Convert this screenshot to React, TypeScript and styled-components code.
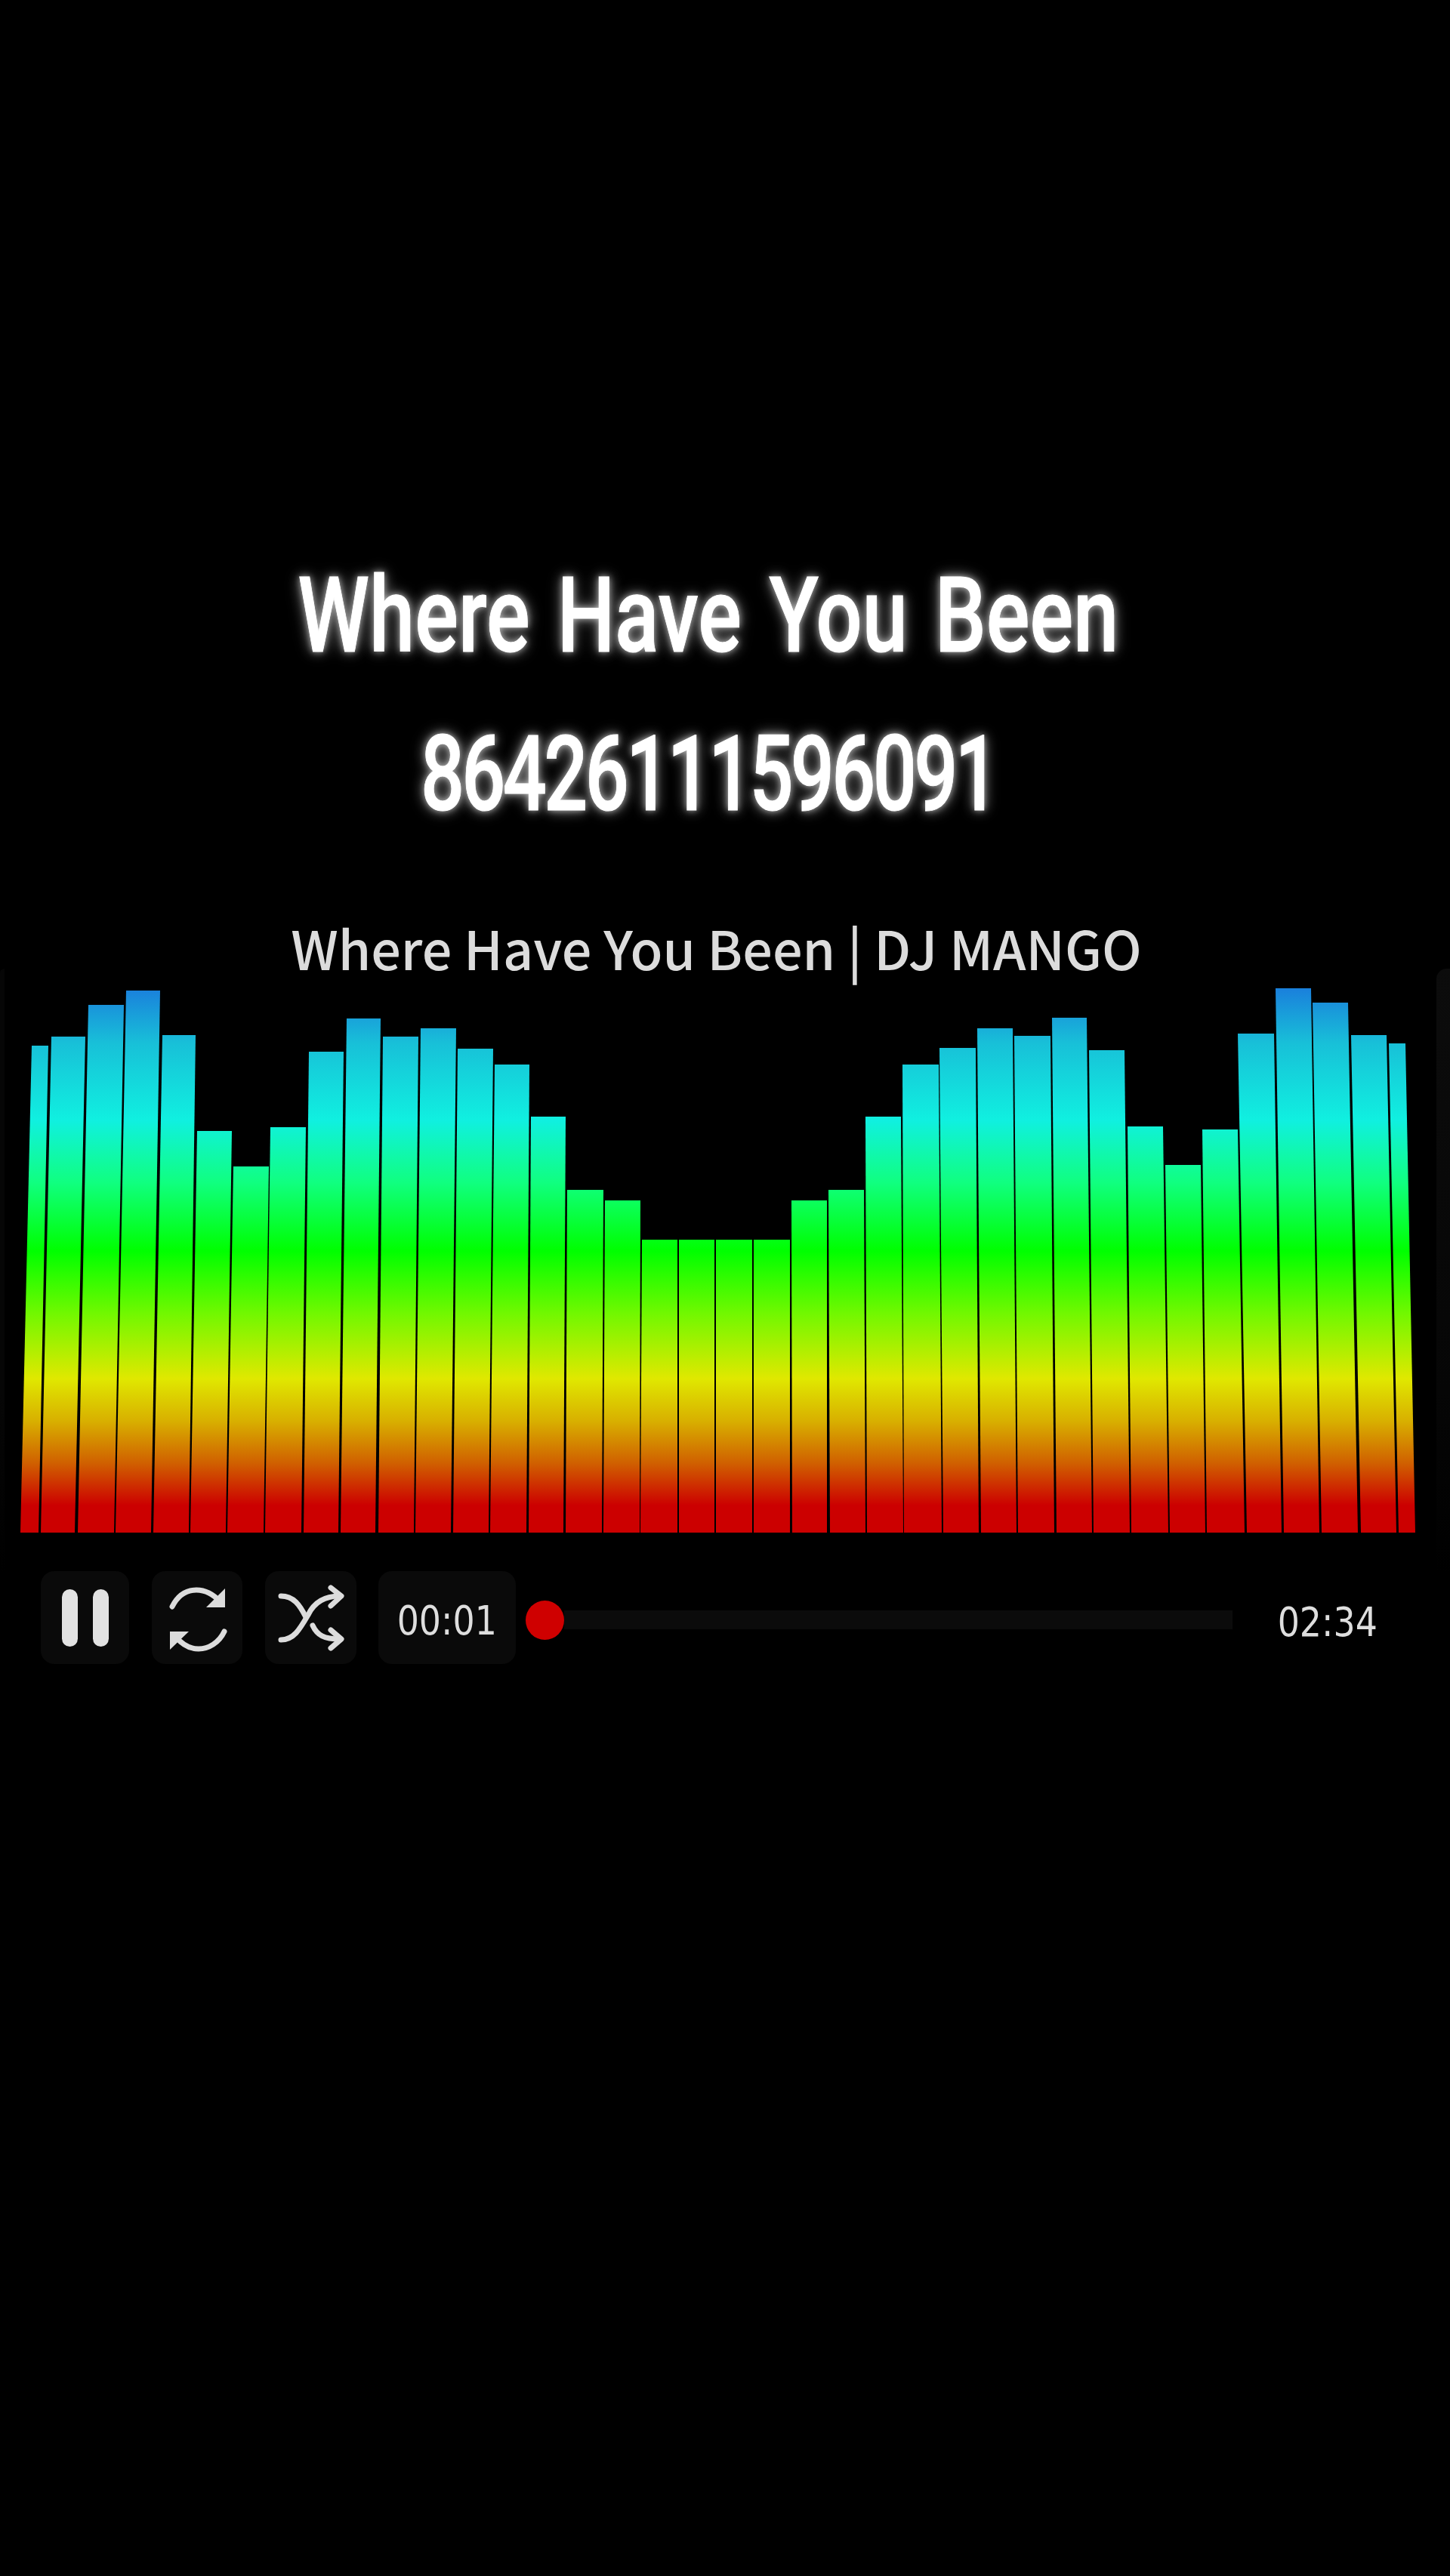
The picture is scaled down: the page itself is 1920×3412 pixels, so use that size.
import { createGlobalStyle, styled } from "styled-components";

const GlobalStyle = createGlobalStyle`
    html, body {
        margin: 0;
        padding: 0;
        background: #000;
    }
`

const Page = styled.div`
    position: relative;
    width: 1920px;
    height: 3412px;
    padding-top: 710px;
    box-sizing: border-box;
    background: #000;
    overflow: hidden;
`

const SideGlow = styled.div<{ $side: "left" | "right" }>`
    position: absolute;
    top: 1283px;
    ${(p) => p.$side}: 0;
    width: ${(p) => (p.$side === "right" ? "18px" : "6px")};
    height: 800px;
    background: linear-gradient(180deg, ${(p) => (p.$side === "right" ? "#0c0c0c" : "#060606")} 0%, #060606 70%, #000 100%);
    border-top-left-radius: 14px;
`

const TitleBlock = styled.div`
    width: 1875px;
    display: flex;
    flex-direction: column;
    align-items: center;
`

const TitleLine = styled.div<{ $squeeze: number; $tracking: number; $wordGap: number }>`
    height: 210px;
    line-height: 210px;
    font-family: "Roboto", "Liberation Sans", sans-serif;
    font-weight: 500;
    font-size: 140px;
    color: #fff;
    white-space: nowrap;
    letter-spacing: ${(p) => p.$tracking}px;
    word-spacing: ${(p) => p.$wordGap}px;
    transform: scaleX(${(p) => p.$squeeze});
    -webkit-text-stroke: 1px #fff;
    text-shadow: 0 0 10px rgba(255, 255, 255, 0.6), 0 0 20px rgba(255, 255, 255, 0.45), 0 0 28px rgba(255, 255, 255, 0.2);
`

const Subtitle = styled.div`
    width: 1897px;
    height: 170px;
    padding-top: 65px;
    box-sizing: border-box;
    line-height: 120px;
    text-align: center;
    font-family: "Noto Sans CJK SC", "Noto Sans", sans-serif;
    font-weight: 500;
    font-size: 70px;
    color: #dcdcdc;
    white-space: nowrap;
`

const BarsSvg = styled.svg`
    display: block;
    width: 1920px;
    height: 735px;
`

const Controls = styled.div`
    display: flex;
    align-items: center;
    padding: 46px 0 0 54px;
`

const IconButton = styled.div<{ $width: number; $gap: number }>`
    display: flex;
    align-items: center;
    justify-content: center;
    gap: 20px;
    width: ${(p) => p.$width}px;
    height: 123px;
    margin-right: ${(p) => p.$gap}px;
    background: #0a0a0a;
    border-radius: 18px;
`

const PauseBar = styled.div`
    width: 21px;
    height: 76px;
    border-radius: 11px;
    background: #e2e2e2;
`

const Time = styled.div`
    font-family: "DejaVu Sans", sans-serif;
    font-size: 54px;
    line-height: 60px;
    color: #dedede;
    white-space: nowrap;
    transform: scaleX(0.85);
`

const TimeBox = styled.div`
    display: flex;
    align-items: center;
    justify-content: center;
    width: 182px;
    height: 123px;
    padding-top: 8px;
    box-sizing: border-box;
    margin-right: 13px;
    background: #0a0a0a;
    border-radius: 18px;
`

const Slider = styled.div`
    display: flex;
    align-items: center;
    margin-top: 6px;
`

const Knob = styled.div`
    width: 51px;
    height: 52px;
    border-radius: 50%;
    background: #cf0000;
`

const Rail = styled.div`
    width: 885px;
    height: 25px;
    background: #0b0b0b;
`

const TotalTime = styled.div`
    width: 131px;
    margin: 12px 0 0 60px;
    display: flex;
    justify-content: center;
`

// tl, tr = x of the top edge, bl, br = x of the bottom edge, y = top of the bar
const bars = [
    [42, 64, 27, 51, 1385], [68, 113, 54, 99, 1373], [117, 164, 103, 151, 1331], [167, 212, 153, 200, 1312],
    [215, 259, 203, 250, 1371], [261, 307, 252, 299, 1498], [309, 356, 301, 349, 1545], [358, 405, 351, 399, 1493],
    [409, 455, 402, 448, 1393], [459, 504, 451, 497, 1349], [507, 554, 501, 548, 1373], [557, 604, 550, 597, 1362],
    [606, 653, 600, 647, 1389], [655, 701, 649, 697, 1410], [703, 749, 700, 746, 1479], [751, 799, 749, 797, 1576],
    [801, 848, 799, 847, 1590], [850, 897, 848, 897, 1642], [899, 946, 899, 946, 1642], [948, 996, 948, 996, 1642],
    [998, 1046, 998, 1046, 1642], [1048, 1095, 1049, 1095, 1590], [1097, 1144, 1099, 1146, 1576], [1146, 1193, 1148, 1196, 1479],
    [1195, 1243, 1197, 1247, 1410], [1244, 1292, 1249, 1296, 1388], [1294, 1341, 1299, 1346, 1362], [1343, 1391, 1348, 1396, 1372],
    [1393, 1439, 1399, 1446, 1348], [1442, 1489, 1448, 1496, 1391], [1493, 1540, 1498, 1547, 1492], [1543, 1590, 1549, 1596, 1543],
    [1592, 1639, 1598, 1648, 1496], [1639, 1687, 1651, 1697, 1369], [1689, 1736, 1700, 1747, 1309], [1738, 1785, 1750, 1798, 1328],
    [1789, 1836, 1802, 1849, 1371], [1839, 1861, 1852, 1874, 1382],
]

const stops = [
    [1309, "#1a80dc"], [1382, "#18c0d8"], [1484, "#10f0e0"], [1566, "#10ff80"], [1657, "#00ff00"],
    [1739, "#70f800"], [1826, "#e0e800"], [1882, "#d8b000"], [1938, "#d06000"], [1994, "#cc0000"],
] as const

const BOTTOM = 2030

const RepeatIcon = () => (
    <svg width="90" height="90" viewBox="0 0 90 90" fill="none" stroke="#dcdcdc" strokeWidth="7" strokeLinecap="round">
        <path d="M12 30C20 14 32 8 44 8C56 8 66 13 76 24" />
        <path d="M82 6V31H57Z" fill="#dcdcdc" stroke="none" />
        <path d="M81 63C74 78 60 86 47 86C36 86 25 80 17 70" />
        <path d="M9 87V63H34Z" fill="#dcdcdc" stroke="none" />
    </svg>
)

const ShuffleIcon = () => (
    <svg width="90" height="94" viewBox="0 0 90 94" fill="none" stroke="#dcdcdc" strokeWidth="7" strokeLinecap="round" strokeLinejoin="round">
        <path d="M5 18C22 18 30 30 38 46" />
        <path d="M47 57C53 70 62 75 83 75" />
        <path d="M5 76C22 76 30 62 41 43C48 28 60 18 83 18" />
        <path d="M71 7L85 18L71 31" />
        <path d="M71 63L85 75L71 87" />
    </svg>
)

export default function App() {
    return (
        <Page>
            <GlobalStyle />
            <SideGlow $side="left" />
            <SideGlow $side="right" />
            <TitleBlock>
                <TitleLine $squeeze={0.77} $tracking={0} $wordGap={12}>Where Have You Been</TitleLine>
                <TitleLine $squeeze={0.73} $tracking={-5} $wordGap={0}>86426111596091</TitleLine>
            </TitleBlock>
            <Subtitle>Where Have You Been | DJ MANGO</Subtitle>
            <BarsSvg viewBox="0 1300 1920 735">
                <defs>
                    <linearGradient id="spectrum" gradientUnits="userSpaceOnUse" x1="0" y1="1309" x2="0" y2="1994">
                        {stops.map(([y, color]) => (
                            <stop key={y} offset={(y - 1309) / (1994 - 1309)} stopColor={color} />
                        ))}
                    </linearGradient>
                </defs>
                {bars.map(([tl, tr, bl, br, y], index) => (
                    <polygon key={index} points={`${tl},${y} ${tr},${y} ${br},${BOTTOM} ${bl},${BOTTOM}`} fill="url(#spectrum)" />
                ))}
            </BarsSvg>
            <Controls>
                <IconButton $width={117} $gap={30}>
                    <PauseBar />
                    <PauseBar />
                </IconButton>
                <IconButton $width={120} $gap={30}>
                    <RepeatIcon />
                </IconButton>
                <IconButton $width={121} $gap={29}>
                    <ShuffleIcon />
                </IconButton>
                <TimeBox>
                    <Time>00:01</Time>
                </TimeBox>
                <Slider>
                    <Knob />
                    <Rail />
                </Slider>
                <TotalTime>
                    <Time>02:34</Time>
                </TotalTime>
            </Controls>
        </Page>
    )
}
